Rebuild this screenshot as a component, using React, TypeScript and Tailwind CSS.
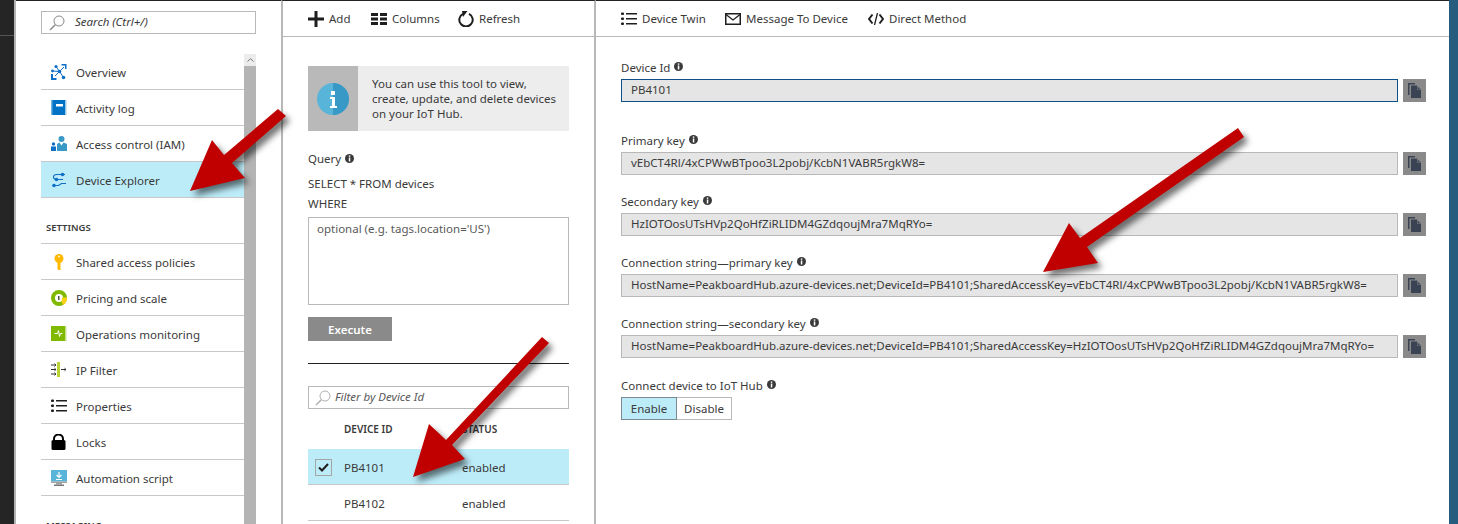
import type { ReactNode } from "react";

function Info() {
  return (
    <svg width="9" height="9" viewBox="0 0 9 9" className="inline-block ml-[4px] shrink-0">
      <circle cx="4.5" cy="4.5" r="4.5" fill="#3a3a3a" />
      <rect x="3.8" y="1.4" width="1.5" height="1.4" fill="#fff" />
      <rect x="3.8" y="3.5" width="1.5" height="4" fill="#fff" />
    </svg>
  );
}

function Lens({ color = "#8a8a8a" }: { color?: string }) {
  return (
    <svg width="16" height="16" viewBox="0 0 16 16" className="shrink-0">
      <circle cx="10" cy="6" r="5" fill="none" stroke={color} strokeWidth="1" />
      <path d="M6.3 9.7L1 15" stroke={color} strokeWidth="1.5" />
    </svg>
  );
}

function OverviewIcon() {
  return (
    <svg width="16" height="16" viewBox="0 0 16 16">
      <g fill="#0f6fc6">
        <path d="M10.500 0h5v5H14V1.500h-3.500zM0 10h2v4h3.500v2H0z" />
        <circle cx="5" cy="2.500" r="1.600" />
        <circle cx="1.500" cy="7" r="1.400" />
        <circle cx="8.500" cy="7.500" r="1.800" />
        <circle cx="12.500" cy="13.500" r="1.800" />
      </g>
      <path d="M5 2.500l3.500 5L1.500 7M8.500 7.500l4 6M8.500 7.500L13 3M8.500 7.500L4 12" fill="none" stroke="#0f6fc6" strokeWidth="1" />
    </svg>
  );
}

function BookIcon() {
  return (
    <svg width="16" height="16" viewBox="0 0 16 16">
      <rect x="1" y="0" width="14" height="15" fill="#0072c6" />
      <rect x="0" y="0" width="1.500" height="15" fill="#6fb2e2" />
      <rect x="14" y="0" width="1.500" height="15" fill="#9bc9ea" />
      <rect x="5" y="4" width="7" height="2.500" fill="#fff" />
    </svg>
  );
}

function AccessIcon() {
  return (
    <svg width="16" height="16" viewBox="0 0 16 16">
      <circle cx="10.500" cy="3" r="3" fill="#3999c6" />
      <path d="M6 8l2.500-1.500 2 3 2-3L16 8v7H6z" fill="#3999c6" />
      <circle cx="2.500" cy="8" r="1.700" fill="#0f6fc6" />
      <rect x="0" y="10.500" width="5" height="4.500" fill="#0f6fc6" />
    </svg>
  );
}

function ExplorerIcon() {
  return (
    <svg width="16" height="16" viewBox="0 0 16 16">
      <path
        d="M14 2.500H6C3.500 2.500 2.500 3.500 2.500 5S3.500 7.500 6 7.500h6M3 13.500h4.500l3-2H15"
        fill="none"
        stroke="#0f6fc6"
        strokeWidth="1.200"
      />
      <g fill="#0f6fc6">
        <circle cx="11.500" cy="2.500" r="1.800" />
        <circle cx="5.500" cy="7.500" r="1.800" />
        <circle cx="3" cy="13.500" r="1.800" />
      </g>
    </svg>
  );
}

function KeyIcon() {
  return (
    <svg width="16" height="16" viewBox="0 0 16 16">
      <circle cx="8" cy="4.500" r="4.500" fill="#ffb900" />
      <path d="M6.500 7h3v9h-2l-1-1z" fill="#ffb900" />
      <rect x="7" y="1.700" width="2" height="1.500" fill="#fff3c4" />
    </svg>
  );
}

function PricingIcon() {
  return (
    <svg width="16" height="16" viewBox="0 0 16 16">
      <circle cx="8" cy="8" r="6" fill="#fff" stroke="#7fba00" strokeWidth="4" />
      <path d="M11 7.500H16A8 8 0 0 1 12 15L10.500 11.500z" fill="#fcd116" />
      <rect x="7" y="6" width="1.500" height="4" fill="#555" />
    </svg>
  );
}

function OpsIcon() {
  return (
    <svg width="16" height="16" viewBox="0 0 16 16">
      <rect x="0" y="0" width="14.500" height="15" fill="#7fba00" />
      <rect x="14" y="0" width="1.500" height="15" fill="#c5e28a" />
      <path d="M3.500 7.500h3l1-3 1 6 1-3h2" fill="none" stroke="#fff" strokeWidth="1" />
    </svg>
  );
}

function IpFilterIcon() {
  return (
    <svg width="16" height="16" viewBox="0 0 16 16">
      <rect x="6" y="0" width="3" height="15" fill="#b8d432" />
      <g stroke="#333" strokeWidth="1" fill="none">
        <path d="M0 3h5M0 7.500h5M0 12h5M10 7.500h5" />
        <path d="M3.500 1.700l1.500 1.300-1.500 1.300M3.500 6.200l1.500 1.300-1.500 1.300M3.500 10.700l1.500 1.300-1.500 1.300M13.500 6.200l1.500 1.300-1.500 1.300" />
      </g>
    </svg>
  );
}

function ListIcon({ color = "#1e1e1e" }: { color?: string }) {
  return (
    <svg width="16" height="14" viewBox="0 0 16 14">
      <g fill={color}>
        <rect x="0" y="0.500" width="3" height="2.500" rx="1" />
        <rect x="0" y="5.500" width="3" height="2.500" rx="1" />
        <rect x="0" y="10.500" width="3" height="2.500" rx="1" />
        <rect x="5" y="1" width="11" height="1.500" />
        <rect x="5" y="6" width="11" height="1.500" />
        <rect x="5" y="11" width="11" height="1.500" />
      </g>
    </svg>
  );
}

function LockIcon() {
  return (
    <svg width="15" height="16" viewBox="0 0 15 16">
      <rect x="0.500" y="6" width="14" height="10" rx="1.500" fill="#000" />
      <path d="M3 7V5a4.500 4.500 0 0 1 9 0v2" fill="none" stroke="#000" strokeWidth="2" />
    </svg>
  );
}

function ScriptIcon() {
  return (
    <svg width="16" height="16" viewBox="0 0 16 16">
      <rect x="0" y="0" width="16" height="11.500" fill="#59b4d9" />
      <rect x="0" y="11.500" width="16" height="1.500" fill="#a0a1a2" />
      <rect x="5" y="13" width="6" height="1.500" fill="#a0a1a2" />
      <rect x="3" y="14.500" width="10" height="1.500" fill="#7a7a7a" />
      <path d="M8 2v5M5.500 5L8 7.500 10.500 5M5 9.500h6" fill="none" stroke="#fff" strokeWidth="1.200" />
    </svg>
  );
}

function NavRow({ icon, label, active }: { icon: ReactNode; label: string; active?: boolean }) {
  return (
    <div className={`h-9 flex items-center border-b border-[#c8c8c8] ${active ? "bg-[#bdecf9]" : ""}`}>
      <div className="w-[35px] pl-[10px] flex items-center justify-start shrink-0">{icon}</div>
      <span className="relative top-[1px]">{label}</span>
    </div>
  );
}

function SectionHead({ label }: { label: string }) {
  return (
    <div className="h-[46px] flex items-end pb-[9px] pl-[5px] border-b border-[#c8c8c8] text-[9.5px] font-semibold">
      <span className="leading-[12px]">{label}</span>
    </div>
  );
}

function ToolButton({ icon, label, className }: { icon: ReactNode; label: string; className: string }) {
  return (
    <div className={`flex items-center gap-[5px] ${className}`}>
      {icon}
      <span>{label}</span>
    </div>
  );
}

function CopyIcon() {
  return (
    <svg width="13" height="15" viewBox="0 0 13 15">
      <path d="M0 0h7v1.500H1.500V12H0z" fill="#3a4354" />
      <path d="M3 2.500h6l4 4V15H3z" fill="#3a4354" />
      <path d="M9 2.500l4 4H9z" fill="#8a8a8a" />
      <path d="M9.500 3.500l2.500 2.500H9.500z" fill="#3a4354" />
    </svg>
  );
}

function KeyField({ label, value, focus, className }: { label: string; value: string; focus?: boolean; className: string }) {
  return (
    <div className={className}>
      <div className="h-[17px] flex items-center">
        <span className="relative top-[1px]">{label}</span>
        <Info />
      </div>
      <div className="flex gap-[5px] mt-[4px]">
        <div
          className={`w-[777px] h-[23px] flex items-center pl-[9px] bg-[#e5e5e5] border whitespace-nowrap ${focus ? "border-[#0f4f8a]" : "border-[#b8b8b8]"}`}
        >
          <span className="relative top-[-1px]">{value}</span>
        </div>
        <div className="w-[23px] h-[23px] bg-[#8a8a8a] flex items-center justify-center">
          <CopyIcon />
        </div>
      </div>
    </div>
  );
}

function Arrows() {
  return (
    <svg
      width="1458"
      height="524"
      viewBox="0 0 1458 524"
      className="absolute left-0 top-0 pointer-events-none drop-shadow-[4px_5px_3px_rgba(0,0,0,0.55)]"
    >
      <g fill="#c00000">
        <polygon points="278,109 286,116 232,163 245,178 190,191 212,140 224,155" />
        <polygon points="542,337 549,343 452,445 465,459 413,477 429,424 446,440" />
        <polygon points="1238,128 1244,137 1087,247 1098,263 1043,272 1069,223 1080,238" />
      </g>
    </svg>
  );
}

export default function App() {
  return (
    <div className="relative w-[1458px] h-[524px] overflow-hidden flex bg-white text-[#3a3a3a] text-[11.5px] font-['Noto_Sans',sans-serif]">
      {/* dark strip at the far left */}
      <div className="w-[14px] shrink-0 bg-[#252525]">
        <div className="h-[36px] border-b border-[#555]" />
      </div>
      <div className="w-[2px] shrink-0 bg-[#b4b4b4]" />

      {/* resource menu */}
      <div className="w-[265px] shrink-0 border-t border-[#222] pl-[25px] pr-[25px]">
        <div className="mt-[10px] h-[23px] flex items-center gap-[10px] pl-[7px] border border-[#b8b8b8] italic">
          <Lens />
          <span className="relative top-[-1px]">Search (Ctrl+/)</span>
        </div>
        <div className="flex mt-[20px]">
          <div className="w-[203px] shrink-0">
            <NavRow icon={<OverviewIcon />} label="Overview" />
            <NavRow icon={<BookIcon />} label="Activity log" />
            <NavRow icon={<AccessIcon />} label="Access control (IAM)" />
            <NavRow icon={<ExplorerIcon />} label="Device Explorer" active />
            <SectionHead label="SETTINGS" />
            <NavRow icon={<KeyIcon />} label="Shared access policies" />
            <NavRow icon={<PricingIcon />} label="Pricing and scale" />
            <NavRow icon={<OpsIcon />} label="Operations monitoring" />
            <NavRow icon={<IpFilterIcon />} label="IP Filter" />
            <NavRow icon={<ListIcon />} label="Properties" />
            <NavRow icon={<LockIcon />} label="Locks" />
            <NavRow icon={<ScriptIcon />} label="Automation script" />
            <SectionHead label="MESSAGING" />
          </div>
          <div className="w-[12px] shrink-0 flex flex-col">
            <div className="h-[12px] bg-[#ececec] flex items-center justify-center">
              <svg width="7" height="4" viewBox="0 0 7 4">
                <path d="M0.500 3.500L3.500 0.700 6.500 3.500" fill="none" stroke="#777" strokeWidth="1" />
              </svg>
            </div>
            <div className="flex-1 bg-[#b4b4b4]" />
          </div>
        </div>
      </div>

      {/* device list blade */}
      <div className="w-[315px] shrink-0 border-x-2 border-x-[#b8b8b8] border-t border-t-[#222]">
        <div className="h-[36px] border-b border-[#b8b8b8] flex items-center pl-[25px]">
          <ToolButton
            className="w-[63px]"
            icon={
              <svg width="16" height="16" viewBox="0 0 16 16">
                <path d="M6.500 0h3v6.500H16v3H9.500V16h-3V9.500H0v-3h6.500z" fill="#1e1e1e" />
              </svg>
            }
            label="Add"
          />
          <ToolButton
            className="w-[87px]"
            icon={
              <svg width="16" height="12" viewBox="0 0 16 12">
                <path d="M0 0h7v3H0zM9 0h7v3H9zM0 4.500h7v3H0zM9 4.500h7v3H9zM0 9h7v3H0zM9 9h7v3H9z" fill="#1e1e1e" />
              </svg>
            }
            label="Columns"
          />
          <ToolButton
            className=""
            icon={
              <svg width="16" height="16" viewBox="0 0 16 16">
                <path d="M5 2.800A6.700 6.700 0 1 0 11 2.800" fill="none" stroke="#1e1e1e" strokeWidth="2" />
                <path d="M4 0L9.500 0 5 6z" fill="#1e1e1e" />
              </svg>
            }
            label="Refresh"
          />
        </div>
        <div className="pl-[25px] w-[286px]">
          <div className="mt-[29px] h-[65px] flex bg-[#ededed]">
            <div className="w-[50px] bg-[#b9b9b9] flex items-center justify-center">
              <svg width="32" height="32" viewBox="0 0 32 32">
                <circle cx="16" cy="16" r="16" fill="#59b4d9" />
                <path d="M16 0A16 16 0 0 1 16 32L16 16z" fill="#3999c6" />
                <rect x="14" y="8" width="4" height="4" fill="#fff" />
                <path d="M13 14h5v9h2v2h-7v-2h2v-7h-2z" fill="#fff" />
              </svg>
            </div>
            <div className="pl-[14px] pt-[10px] leading-[15px] w-[205px]">
              You can use this tool to view, create, update, and delete devices on your IoT Hub.
            </div>
          </div>
          <div className="mt-[19px] h-[17px] flex items-center">
            Query
            <Info />
          </div>
          <div className="mt-[8px] h-[17px] flex items-center">SELECT * FROM devices</div>
          <div className="mt-[3px] h-[17px] flex items-center">WHERE</div>
          <div className="mt-[5px] h-[88px] border border-[#b8b8b8] pl-[8px] pt-[2px] text-[#5a5a5a]">
            optional (e.g. tags.location='US')
          </div>
          <div className="mt-[12px] w-[84px] h-[24px] bg-[#8a8a8a] text-white font-semibold flex items-center justify-center">
            <span className="relative top-[1px]">Execute</span>
          </div>
          <div className="mt-[22px] h-px bg-[#222]" />
          <div className="mt-[22px] h-[23px] flex items-center gap-[4px] pl-[6px] border border-[#b8b8b8] italic text-[#5a5a5a]">
            <Lens color="#b0b0b0" />
            <span className="relative top-[-1px]">Filter by Device Id</span>
          </div>
          <div className="h-[40px] flex items-center text-[10px] font-semibold pt-[1px]">
            <span className="w-[154px] pl-[36px]">DEVICE ID</span>
            <span>STATUS</span>
          </div>
          <div className="h-9 flex items-center bg-[#bdecf9] border-b border-[#c8c8c8]">
            <div className="w-[36px] pl-[7px]">
              <div className="w-[17px] h-[17px] relative top-[1px] border border-[#a5a5a5] flex items-center justify-center">
                <svg width="11" height="9" viewBox="0 0 11 9">
                  <path d="M1 4.500L4 7.500 10 1" fill="none" stroke="#1e1e1e" strokeWidth="2" />
                </svg>
              </div>
            </div>
            <span className="w-[118px] relative top-[1px]">PB4101</span>
            <span className="relative top-[1px]">enabled</span>
          </div>
          <div className="h-9 flex items-center border-b border-[#c8c8c8]">
            <span className="w-[154px] pl-[36px] relative top-[1px]">PB4102</span>
            <span className="relative top-[1px]">enabled</span>
          </div>
        </div>
      </div>

      {/* device details blade */}
      <div className="w-[853px] shrink-0 border-t border-[#222]">
        <div className="h-[36px] border-b border-[#b8b8b8] flex items-center pl-[25px]">
          <ToolButton className="w-[104px]" icon={<ListIcon />} label="Device Twin" />
          <ToolButton
            className="w-[143px]"
            icon={
              <svg width="16" height="12" viewBox="0 0 16 12">
                <rect x="0.750" y="0.750" width="14.500" height="10.500" fill="none" stroke="#1e1e1e" strokeWidth="1.500" />
                <path d="M1 1.500L8 7l7-5.500" fill="none" stroke="#1e1e1e" strokeWidth="1.300" />
              </svg>
            }
            label="Message To Device"
          />
          <ToolButton
            className=""
            icon={
              <svg width="16" height="12" viewBox="0 0 16 12">
                <path d="M4.500 1.500L1 6l3.500 4.500M11.500 1.500L15 6l-3.500 4.500" fill="none" stroke="#1e1e1e" strokeWidth="2" />
                <path d="M9.500 0L6.500 12" stroke="#1e1e1e" strokeWidth="1.300" />
              </svg>
            }
            label="Direct Method"
          />
        </div>
        <div className="pl-[25px]">
          <KeyField className="mt-[21px]" label="Device Id" value="PB4101" focus />
          <KeyField className="mt-[29px]" label="Primary key" value="vEbCT4Rl/4xCPWwBTpoo3L2pobj/KcbN1VABR5rgkW8=" />
          <KeyField className="mt-[17px]" label="Secondary key" value="HzIOTOosUTsHVp2QoHfZiRLIDM4GZdqoujMra7MqRYo=" />
          <KeyField
            className="mt-[17px]"
            label="Connection string—primary key"
            value="HostName=PeakboardHub.azure-devices.net;DeviceId=PB4101;SharedAccessKey=vEbCT4Rl/4xCPWwBTpoo3L2pobj/KcbN1VABR5rgkW8="
          />
          <KeyField
            className="mt-[17px]"
            label="Connection string—secondary key"
            value="HostName=PeakboardHub.azure-devices.net;DeviceId=PB4101;SharedAccessKey=HzIOTOosUTsHVp2QoHfZiRLIDM4GZdqoujMra7MqRYo="
          />
          <div className="mt-[18px] h-[17px] flex items-center">
            <span className="relative top-[1px]">Connect device to IoT Hub</span>
            <Info />
          </div>
          <div className="mt-[4px] flex">
            <div className="w-[56px] h-[23px] bg-[#bdecf9] border border-[#7a8a90] flex items-center justify-center">Enable</div>
            <div className="w-[55px] h-[23px] border border-l-0 border-[#b8b8b8] flex items-center justify-center">Disable</div>
          </div>
        </div>
      </div>

      <div className="w-[9px] shrink-0 bg-[#265d7f]" />
      <Arrows />
    </div>
  );
}
